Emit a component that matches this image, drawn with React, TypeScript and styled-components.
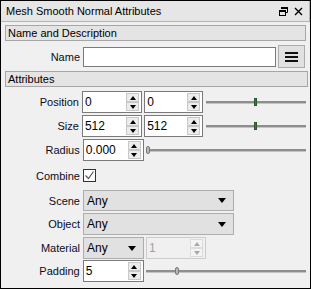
import React from 'react';
import styled, { createGlobalStyle } from 'styled-components';

const GlobalStyle = createGlobalStyle`
  html, body {
    margin: 0;
    padding: 0;
    background: #f0f0f0;
  }
  * {
    box-sizing: border-box;
  }
`;

const FONT = `'Liberation Sans', Arial, sans-serif`;

const Panel = styled.div`
  width: 311px;
  height: 289px;
  border: 1px solid #000;
  background: #f0f0f0;
  font-family: ${FONT};
  font-size: 11px;
  color: #000;
  display: flex;
  flex-direction: column;
  overflow: hidden;
`;

const TitleBar = styled.div`
  height: 21px;
  background: #e6e6e6;
  border-bottom: 1px solid #b4b4b4;
  border-right: 1px solid #b4b4b4;
  display: flex;
  align-items: center;
  padding: 0 6px 0 5px;
  font-size: 11px;
`;

const Title = styled.span`
  flex: 1;
`;

const TitleButtons = styled.div`
  display: flex;
  align-items: center;
  gap: 6px;
`;

const Body = styled.div`
  display: flex;
  flex-direction: column;
  padding: 0 4px 0 4px;
`;

const GroupHeader = styled.div<{ $top: number; $extra?: number }>`
  margin-top: ${p => p.$top}px;
  margin-right: ${p => -(p.$extra ?? 0)}px;
  height: 16px;
  background: #e4e4e4;
  border: 1px solid #a6a6a6;
  display: flex;
  align-items: center;
  padding-left: 2px;
`;

const Row = styled.div<{ $top: number; $h: number }>`
  margin-top: ${p => p.$top}px;
  height: ${p => p.$h}px;
  display: flex;
  align-items: center;
  margin-left: -4px;
`;

const Label = styled.div`
  width: 79px;
  text-align: right;
  margin-right: 3px;
  color: #0c0c20;
`;

const TextInput = styled.div`
  width: 193px;
  height: 20px;
  background: #fff;
  border: 1px solid #7a7a7a;
`;

const MenuButton = styled.div`
  width: 27px;
  height: 23px;
  margin-left: 2px;
  background: #e1e1e1;
  border: 1px solid #adadad;
  display: flex;
  align-items: center;
  justify-content: center;
`;

const SpinBox = styled.div<{ $w: number; $disabled?: boolean }>`
  width: ${p => p.$w}px;
  height: 22px;
  background: ${p => (p.$disabled ? '#f0f0f0' : '#fff')};
  border: 1px solid ${p => (p.$disabled ? '#cccccc' : '#7a7a7a')};
  display: flex;
  align-items: center;
  padding: 0 2px 0 2px;
  color: ${p => (p.$disabled ? '#a0a0a0' : '#000')};
  font-size: 12px;
  margin-right: 2px;
`;

const SpinValue = styled.span`
  flex: 1;
`;

const SpinButtons = styled.div`
  display: flex;
  flex-direction: column;
  width: 13px;
  height: 18px;
`;

const SpinButton = styled.div<{ $disabled?: boolean }>`
  flex: 1;
  border: 1px solid ${p => (p.$disabled ? '#dcdcdc' : '#c8c8c8')};
  background: ${p => (p.$disabled ? '#f4f4f4' : '#ececec')};
  display: flex;
  align-items: center;
  justify-content: center;
`;

const Arrow = styled.div<{ $dir: 'up' | 'down'; $disabled?: boolean }>`
  width: 0;
  height: 0;
  border-left: 3px solid transparent;
  border-right: 3px solid transparent;
  ${p =>
    p.$dir === 'up'
      ? `border-bottom: 4px solid ${p.$disabled ? '#a8a8a8' : '#000'};`
      : `border-top: 4px solid ${p.$disabled ? '#a8a8a8' : '#000'};`}
`;

const Slider = styled.div<{ $w: number; $left: number }>`
  position: relative;
  width: ${p => p.$w}px;
  margin-left: ${p => p.$left}px;
  height: 10px;
  display: flex;
  align-items: center;
`;

const Groove = styled.div`
  width: 100%;
  height: 2px;
  background: #8e8e8e;
  border-bottom: 1px solid #c4c4c4;
  box-sizing: content-box;
`;

const Handle = styled.div<{ $green?: boolean }>`
  position: absolute;
  top: 1px;
  width: ${p => (p.$green ? 3 : 4)}px;
  height: 8px;
  border-radius: ${p => (p.$green ? 0 : 2)}px;
  background: ${p => (p.$green ? '#1f8f1f' : '#b8b8b8')};
  border: 1px solid ${p => (p.$green ? '#2a5a2a' : '#7a7a7a')};
`;

const CheckBox = styled.div`
  width: 13px;
  height: 13px;
  background: #fff;
  border: 1px solid #333;
  display: flex;
  align-items: center;
  justify-content: center;
`;

const Combo = styled.div<{ $w: number }>`
  width: ${p => p.$w}px;
  height: 100%;
  background: #e1e1e1;
  border: 1px solid #adadad;
  display: flex;
  align-items: center;
  padding: 0 7px 0 3px;
  font-size: 12px;
  margin-right: 2px;
`;

const ComboText = styled.span`
  flex: 1;
`;

const ComboArrow = styled.div`
  width: 0;
  height: 0;
  border-left: 4px solid transparent;
  border-right: 4px solid transparent;
  border-top: 5px solid #000;
`;

const Spin: React.FC<{ value: string; w?: number; disabled?: boolean }> = ({ value, w = 61, disabled }) => (
  <SpinBox $w={w} $disabled={disabled}>
    <SpinValue>{value}</SpinValue>
    <SpinButtons>
      <SpinButton $disabled={disabled}>
        <Arrow $dir="up" $disabled={disabled} />
      </SpinButton>
      <SpinButton $disabled={disabled}>
        <Arrow $dir="down" $disabled={disabled} />
      </SpinButton>
    </SpinButtons>
  </SpinBox>
);

const SliderBar: React.FC<{ w: number; left: number; pos: number; green?: boolean }> = ({ w, left, pos, green }) => (
  <Slider $w={w} $left={left}>
    <Groove />
    <Handle $green={green} style={{ left: pos }} />
  </Slider>
);

export default function App() {
  return (
    <>
      <GlobalStyle />
      <Panel>
        <TitleBar>
          <Title>Mesh Smooth Normal Attributes</Title>
          <TitleButtons>
            <svg width="9" height="9" viewBox="0 0 9 9">
              <path d="M2.5 0.5h6v5h-2" fill="none" stroke="#000" strokeWidth="1" />
              <rect x="2" y="0" width="7" height="2" fill="#000" />
              <rect x="0.5" y="3.5" width="6" height="5" fill="none" stroke="#000" />
              <rect x="0" y="3" width="7" height="2" fill="#000" />
            </svg>
            <svg width="9" height="9" viewBox="0 0 9 9">
              <path d="M1 1L8 8M8 1L1 8" stroke="#000" strokeWidth="1.4" />
            </svg>
          </TitleButtons>
        </TitleBar>
        <Body>
          <GroupHeader $top={3}>Name and Description</GroupHeader>
          <Row $top={4} $h={23}>
            <Label>Name</Label>
            <TextInput />
            <MenuButton>
              <svg width="13" height="10" viewBox="0 0 13 10">
                <rect x="0" y="0" width="13" height="2" fill="#111" />
                <rect x="0" y="4" width="13" height="2" fill="#111" />
                <rect x="0" y="8" width="13" height="2" fill="#111" />
              </svg>
            </MenuButton>
          </Row>
          <GroupHeader $top={3} $extra={2}>Attributes</GroupHeader>
          <Row $top={4} $h={22}>
            <Label>Position</Label>
            <Spin value="0" />
            <Spin value="0" w={60} />
            <SliderBar w={101} left={1} pos={48} green />
          </Row>
          <Row $top={2} $h={22}>
            <Label>Size</Label>
            <Spin value="512" />
            <Spin value="512" w={60} />
            <SliderBar w={101} left={1} pos={48} green />
          </Row>
          <Row $top={2} $h={22}>
            <Label>Radius</Label>
            <Spin value="0.000" />
            <SliderBar w={161} left={0} pos={0} />
          </Row>
          <Row $top={2} $h={25}>
            <Label>Combine</Label>
            <CheckBox>
              <svg width="11" height="11" viewBox="0 0 11 11">
                <path d="M1.5 5.5L4.5 8.5L9.5 1.5" fill="none" stroke="#555" strokeWidth="1.2" />
              </svg>
            </CheckBox>
          </Row>
          <Row $top={2} $h={21}>
            <Label>Scene</Label>
            <Combo $w={151}>
              <ComboText>Any</ComboText>
              <ComboArrow />
            </Combo>
          </Row>
          <Row $top={2} $h={22}>
            <Label>Object</Label>
            <Combo $w={151}>
              <ComboText>Any</ComboText>
              <ComboArrow />
            </Combo>
          </Row>
          <Row $top={2} $h={22}>
            <Label>Material</Label>
            <Combo $w={61}>
              <ComboText>Any</ComboText>
              <ComboArrow />
            </Combo>
            <Spin value="1" w={60} disabled />
          </Row>
          <Row $top={1} $h={22}>
            <Label>Padding</Label>
            <Spin value="5" />
            <SliderBar w={161} left={0} pos={29} />
          </Row>
        </Body>
      </Panel>
    </>
  );
}
